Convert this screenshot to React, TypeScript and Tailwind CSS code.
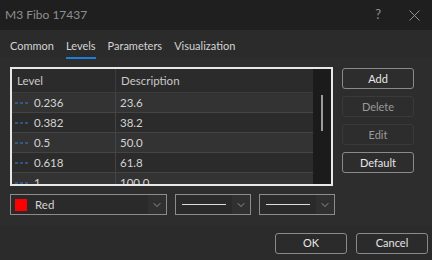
import { ChevronDown } from 'lucide-react';

const rows = [
  { level: '0.236', desc: '23.6' },
  { level: '0.382', desc: '38.2' },
  { level: '0.5', desc: '50.0' },
  { level: '0.618', desc: '61.8' },
  { level: '1', desc: '100.0' },
];

function Dashes() {
  return (
    <svg width="14" height="4" viewBox="0 0 14 4" className="shrink-0">
      <line x1="0" y1="2" x2="14" y2="2" stroke="#3a7fd6" strokeWidth="1" strokeDasharray="3 2" />
    </svg>
  );
}

function Btn({ label, dim }: { label: string; dim?: boolean }) {
  return (
    <button
      className={`h-[21px] w-[72px] rounded-[3px] border text-[11px] leading-none ${
        dim ? 'border-[#3a3a3a] text-[#9a9a9a]' : 'border-[#8a8a8a] text-[#e6e6e6]'
      }`}
    >
      {label}
    </button>
  );
}

function LineSelect() {
  return (
    <div className="flex h-[21px] w-[76px] items-stretch border border-[#8c8c8c] bg-[#2a2a2a]">
      <div className="flex flex-1 items-center px-[6px]">
        <div className="h-px w-full bg-[#dcdcdc]" />
      </div>
      <div className="flex w-[18px] items-center justify-center bg-[#303030]">
        <ChevronDown size={12} strokeWidth={1.5} className="text-[#b0b0b0]" />
      </div>
    </div>
  );
}

export default function App() {
  return (
    <div
      className="flex h-[260px] w-[432px] flex-col bg-[#2b2b2b] text-[11px] text-[#d4d4d4]"
      style={{ fontFamily: 'Lato, "Noto Sans", sans-serif' }}
    >
      <div className="flex h-[30px] items-center justify-between bg-[#1f1f1f] pl-[5px] pr-[12px]">
        <span className="text-[12px] text-[#8f8f8f]">M3 Fibo 17437</span>
        <div className="flex items-center gap-[28px] text-[#8f8f8f]">
          <span className="text-[13px]">?</span>
          <svg width="11" height="11" viewBox="0 0 11 11">
            <path d="M0.5 0.5 L10.5 10.5 M10.5 0.5 L0.5 10.5" stroke="#8f8f8f" strokeWidth="1" />
          </svg>
        </div>
      </div>

      <div className="flex h-[27px] items-start gap-[12px] pl-[10px] pt-[8px]">
        <span>Common</span>
        <span className="relative">
          Levels
          <span className="absolute -bottom-[4px] left-0 h-[2px] w-full bg-[#1a7fd8]" />
        </span>
        <span>Parameters</span>
        <span>Visualization</span>
      </div>

      <div className="flex h-[169px] flex-col bg-[#2d2d2d] pl-[10px] pr-[3px] pt-[10px]">
        <div className="flex gap-[9px]">
          <div className="flex h-[119px] w-[323px] border-2 border-[#e8e8e8] bg-[#2b2b2b]">
            <div className="flex flex-1 flex-col overflow-hidden text-[11.5px]">
              <div className="flex h-[24px] shrink-0 items-center border-b border-[#3c3c3c] text-[#c8c8c8]">
                <div className="flex h-full w-[104px] items-center border-r border-[#3c3c3c] pl-[5px]">Level</div>
                <div className="pl-[5px]">Description</div>
              </div>
              {rows.map((r, i) => (
                <div
                  key={r.level}
                  className={`flex h-[20px] shrink-0 items-center border-b border-[#444444] ${
                    i % 2 === 0 ? 'bg-[#333333]' : 'bg-[#2b2b2b]'
                  }`}
                >
                  <div className="flex h-full w-[104px] items-center gap-[5px] border-r border-[#444444] pl-[3px]">
                    <Dashes />
                    <span>{r.level}</span>
                  </div>
                  <div className="pl-[4px]">{r.desc}</div>
                </div>
              ))}
            </div>
            <div className="relative w-[18px] shrink-0 bg-[#1b1b1b]">
              <div className="absolute left-[8px] top-[26px] h-[36px] w-[2px] bg-[#9c9c9c]" />
            </div>
          </div>
          <div className="flex flex-col gap-[7px] pt-px">
            <Btn label="Add" />
            <Btn label="Delete" dim />
            <Btn label="Edit" dim />
            <Btn label="Default" />
          </div>
        </div>

        <div className="mt-[8px] flex gap-[8px]">
          <div className="flex h-[21px] w-[157px] items-stretch border border-[#8c8c8c] bg-[#2a2a2a]">
            <div className="flex flex-1 items-center gap-[8px] pl-[4px] text-[11.5px]">
              <div className="h-[12px] w-[12px] bg-[#ff0000]" />
              <span>Red</span>
            </div>
            <div className="flex w-[18px] items-center justify-center bg-[#303030]">
              <ChevronDown size={12} strokeWidth={1.5} className="text-[#b0b0b0]" />
            </div>
          </div>
          <LineSelect />
          <LineSelect />
        </div>
      </div>

      <div className="flex flex-1 items-start justify-end gap-[9px] pr-[4px] pt-[7px]">
        <button className="h-[21px] w-[72px] rounded-[3px] border border-[#8a8a8a] text-[11px] text-[#e6e6e6]">OK</button>
        <button className="h-[21px] w-[72px] rounded-[3px] border border-[#8a8a8a] text-[11px] text-[#e6e6e6]">Cancel</button>
      </div>
    </div>
  );
}
